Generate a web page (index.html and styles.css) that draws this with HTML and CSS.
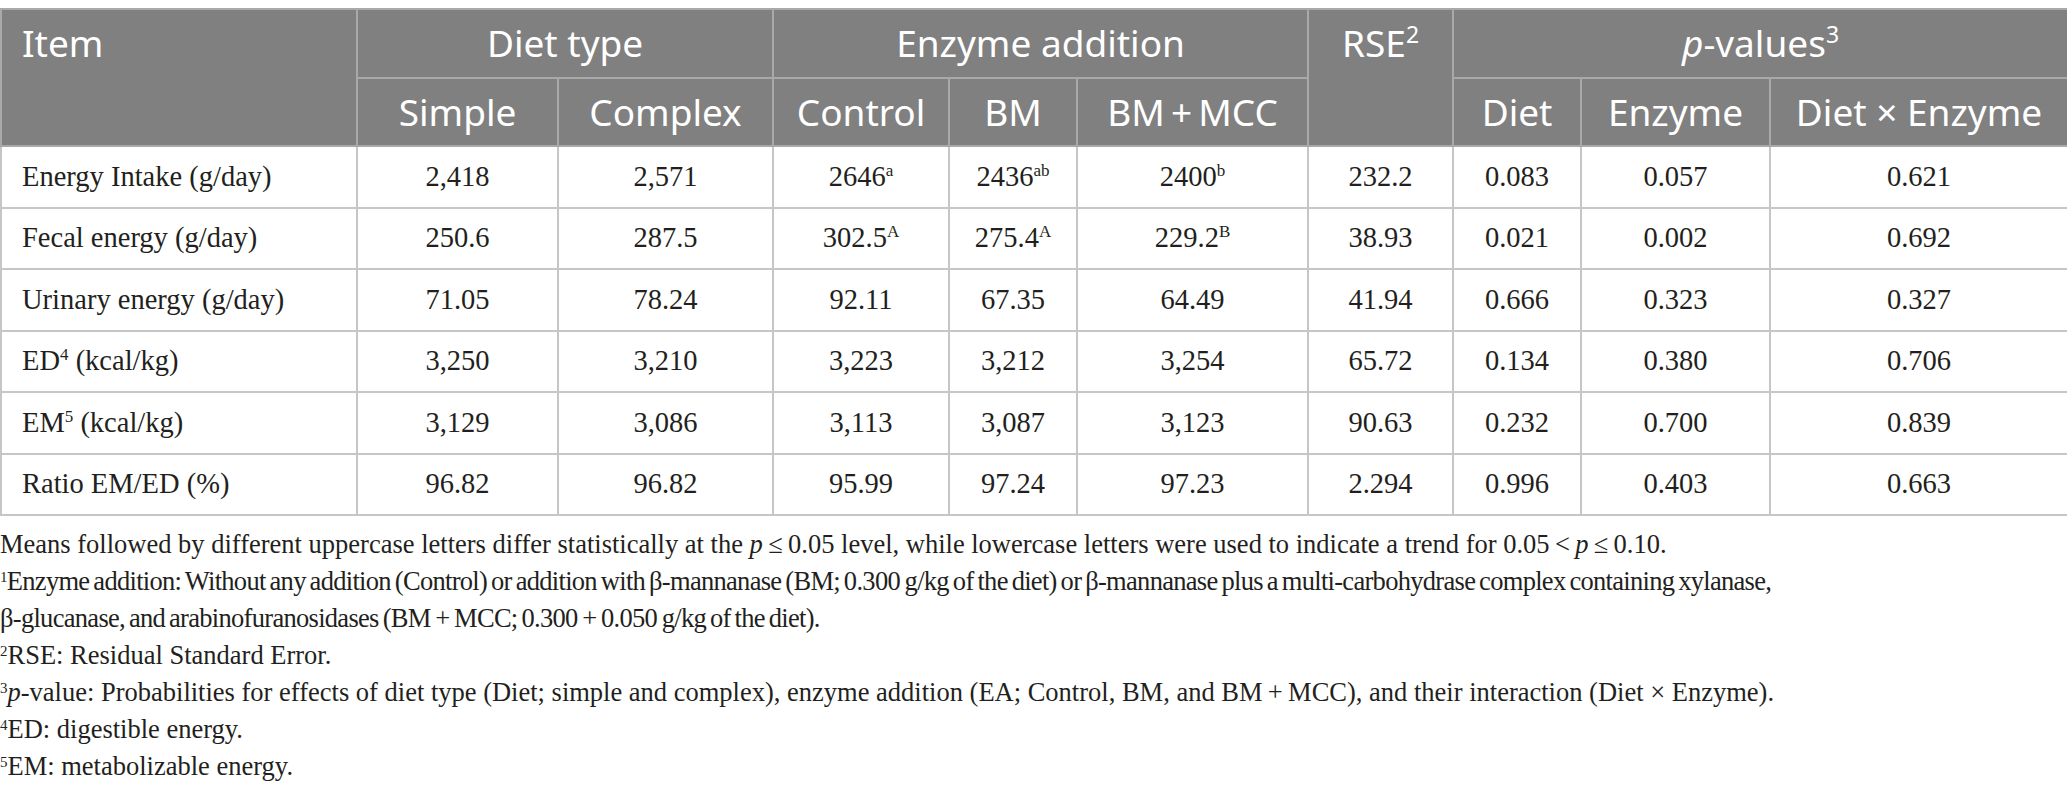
FILE: index.html
```html
<!DOCTYPE html>
<html lang="en">
<head>
  <meta charset="UTF-8" />
  <meta name="viewport" content="width=device-width, initial-scale=1.0"/>
  <title>Energy balance by diet type and enzyme addition</title>
  <link rel="stylesheet" href="styles.css">
</head>
<body>

<table class="data-table">
  <colgroup>
    <col class="w-item">
    <col class="w-simple">
    <col class="w-complex">
    <col class="w-control">
    <col class="w-bm">
    <col class="w-bmmcc">
    <col class="w-rse">
    <col class="w-diet">
    <col class="w-enzyme">
    <col class="w-inter">
  </colgroup>
  <thead>
    <tr class="head-top">
      <th rowspan="2" class="left">Item</th>
      <th colspan="2">Diet type</th>
      <th colspan="3">Enzyme addition</th>
      <th rowspan="2">RSE<sup>2</sup></th>
      <th colspan="3"><i>p</i>-values<sup>3</sup></th>
    </tr>
    <tr class="head-sub">
      <th>Simple</th>
      <th>Complex</th>
      <th>Control</th>
      <th>BM</th>
      <th>BM&#8201;+&#8201;MCC</th>
      <th>Diet</th>
      <th>Enzyme</th>
      <th>Diet × Enzyme</th>
    </tr>
  </thead>
  <tbody>
    <tr>
      <td class="left">Energy Intake (g/day)</td>
      <td>2,418</td><td>2,571</td>
      <td>2646<sup>a</sup></td><td>2436<sup>ab</sup></td><td>2400<sup>b</sup></td>
      <td>232.2</td>
      <td>0.083</td><td>0.057</td><td>0.621</td>
    </tr>
    <tr>
      <td class="left">Fecal energy (g/day)</td>
      <td>250.6</td><td>287.5</td>
      <td>302.5<sup>A</sup></td><td>275.4<sup>A</sup></td><td>229.2<sup>B</sup></td>
      <td>38.93</td>
      <td>0.021</td><td>0.002</td><td>0.692</td>
    </tr>
    <tr>
      <td class="left">Urinary energy (g/day)</td>
      <td>71.05</td><td>78.24</td>
      <td>92.11</td><td>67.35</td><td>64.49</td>
      <td>41.94</td>
      <td>0.666</td><td>0.323</td><td>0.327</td>
    </tr>
    <tr>
      <td class="left">ED<sup>4</sup> (kcal/kg)</td>
      <td>3,250</td><td>3,210</td>
      <td>3,223</td><td>3,212</td><td>3,254</td>
      <td>65.72</td>
      <td>0.134</td><td>0.380</td><td>0.706</td>
    </tr>
    <tr>
      <td class="left">EM<sup>5</sup> (kcal/kg)</td>
      <td>3,129</td><td>3,086</td>
      <td>3,113</td><td>3,087</td><td>3,123</td>
      <td>90.63</td>
      <td>0.232</td><td>0.700</td><td>0.839</td>
    </tr>
    <tr>
      <td class="left">Ratio EM/ED (%)</td>
      <td>96.82</td><td>96.82</td>
      <td>95.99</td><td>97.24</td><td>97.23</td>
      <td>2.294</td>
      <td>0.996</td><td>0.403</td><td>0.663</td>
    </tr>
  </tbody>
</table>

<div class="notes">
  <p>Means followed by different uppercase letters differ statistically at the <i>p</i>&#8201;≤&#8201;0.05 level, while lowercase letters were used to indicate a trend for 0.05&#8201;&lt;&#8201;<i>p</i>&#8201;≤&#8201;0.10.</p>
  <p class="tight"><sup>1</sup>Enzyme addition: Without any addition (Control) or addition with β-mannanase (BM; 0.300&#8201;g/kg of the diet) or β-mannanase plus a multi-carbohydrase complex containing xylanase,<br>β-glucanase, and arabinofuranosidases (BM&#8201;+&#8201;MCC; 0.300&#8201;+&#8201;0.050&#8201;g/kg of the diet).</p>
  <p><sup>2</sup>RSE: Residual Standard Error.</p>
  <p><sup>3</sup><i>p</i>-value: Probabilities for effects of diet type (Diet; simple and complex), enzyme addition (EA; Control, BM, and BM&#8201;+&#8201;MCC), and their interaction (Diet × Enzyme).</p>
  <p><sup>4</sup>ED: digestible energy.</p>
  <p><sup>5</sup>EM: metabolizable energy.</p>
</div>

</body>
</html>
```

FILE: styles.css
```css
body {
  margin: 0;
  padding: 8px 0 0 0;
  background: #fff;
  color: #231f20;
  font-family: "Liberation Serif", "Times New Roman", serif;
}
.data-table {
  width: 2067px;
  table-layout: fixed;
  border-collapse: collapse;
}
.w-item { width: 356px; }
.w-simple { width: 201px; }
.w-complex { width: 215px; }
.w-control { width: 176px; }
.w-bm { width: 128px; }
.w-bmmcc { width: 231px; }
.w-rse { width: 145px; }
.w-diet { width: 128px; }
.w-enzyme { width: 189px; }
.w-inter { width: 298px; }

.data-table th {
  background: #808080;
  color: #fff;
  font-family: "Noto Sans", "Open Sans", sans-serif;
  font-weight: 400;
  font-size: 37px;
  text-align: center;
  vertical-align: top;
  border: 2px solid #a9a9a9;
  padding: 0 8px;
  white-space: nowrap;
}
.head-top th {
  height: 67px;
  line-height: 66px;
}
.head-sub th {
  height: 66px;
  line-height: 66px;
}
.data-table th sup {
  font-size: 23px;
  line-height: 0;
  vertical-align: 14px;
}
.data-table th.left {
  text-align: left;
  padding-left: 20px;
}
.data-table td {
  font-size: 28.5px;
  text-align: center;
  vertical-align: middle;
  border: 2px solid #c6c6c6;
  height: 59.5px;
  padding: 0 10px;
  white-space: nowrap;
}
.data-table td.left {
  text-align: left;
  padding-left: 20px;
}
.data-table td sup {
  font-size: 17px;
  line-height: 0;
  vertical-align: 10px;
}
.notes {
  margin-top: 10px;
  font-size: 26.5px;
  line-height: 37px;
}
.notes p {
  margin: 0;
}
.notes p.tight {
  letter-spacing: -0.7px;
  word-spacing: -2px;
  white-space: nowrap;
}
.notes sup {
  font-size: 15px;
  line-height: 0;
  vertical-align: 8px;
}
```
